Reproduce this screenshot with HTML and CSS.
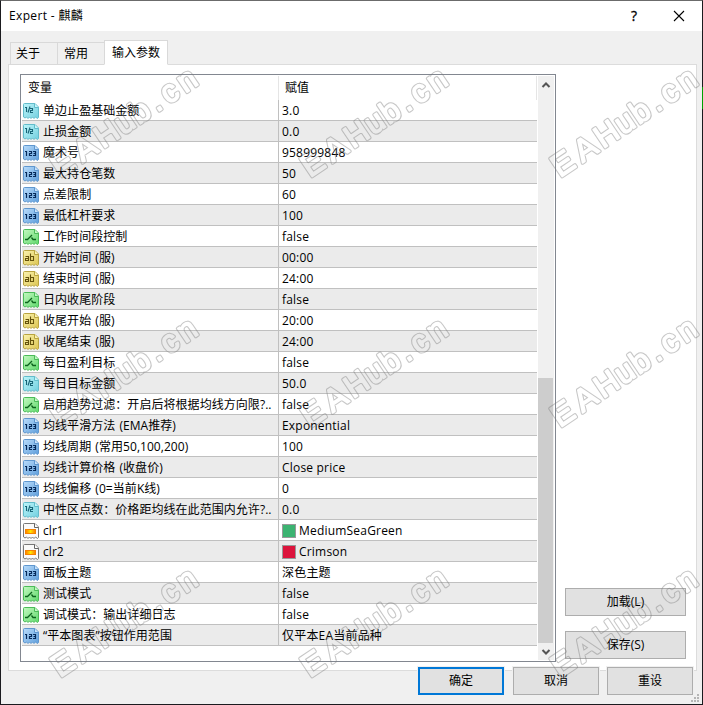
FILE: index.html
```
<!DOCTYPE html>
<html lang="zh-CN">
<head>
<meta charset="utf-8">
<title>Expert - 麒麟</title>
<link rel="stylesheet" href="styles.css">
</head>
<body>
<svg class="defs" width="0" height="0" aria-hidden="true">
  <defs>
    <linearGradient id="gBlue" x2="1" y2="1"><stop offset="0" stop-color="#b9dcfb"/><stop offset="1" stop-color="#5f9edb"/></linearGradient>
    <linearGradient id="gCyan" x2="1" y2="1"><stop offset="0" stop-color="#bdf5fa"/><stop offset="1" stop-color="#72cfdf"/></linearGradient>
    <linearGradient id="gGreen" x2="1" y2="1"><stop offset="0" stop-color="#c4f8c0"/><stop offset="1" stop-color="#5fd96c"/></linearGradient>
    <linearGradient id="gYellow" x2="1" y2="1"><stop offset="0" stop-color="#fbf3ae"/><stop offset="1" stop-color="#dcc552"/></linearGradient>
    <linearGradient id="gOrange"><stop offset="0" stop-color="#ff7a00"/><stop offset=".5" stop-color="#ffe600"/><stop offset="1" stop-color="#ff7a00"/></linearGradient>
    <path id="sheet" d="M.5 1.500q0-1 1-1H12L15.500 4V14.500L14.500 15.500L12.500 14L11 15.500L9.500 14L8 15.500L6.500 14L5 15.500L3.500 14L2 15L.5 14Z"/>
    <path id="fold" d="M11.500.5V4.500H15.500"/>
    <symbol id="int" viewBox="0 0 16 16"><use href="#sheet" fill="url(#gBlue)" stroke="#5f97cf"/><use href="#fold" fill="#c8e2fb" stroke="#5f97cf"/><path d="M2 6.500H3.500V11M6 6.500H8.500V8.500H6.500V10.500H9M10 6.500H12.500V10.500H10M10.500 8.500H12.500" fill="none" stroke="#062a5a" stroke-width="1.200"/></symbol>
    <symbol id="dbl" viewBox="0 0 16 16"><use href="#sheet" fill="url(#gCyan)" stroke="#62bccb"/><use href="#fold" fill="#c9f6fa" stroke="#62bccb"/><path d="M2 4.500H3.500V9M5 9.500L7 3.500M7 5.500H9.500V7.500H7.500V9.500H10" fill="none" stroke="#176477" stroke-width="1.100"/></symbol>
    <symbol id="bool" viewBox="0 0 16 16"><use href="#sheet" fill="url(#gGreen)" stroke="#4bbb58"/><use href="#fold" fill="#c4f7c4" stroke="#4bbb58"/><path d="M2 10.500H4.500L9 6M8.500 8.500L10 10.500H13" fill="none" stroke="#0c641d" stroke-width="1.300"/></symbol>
    <symbol id="str" viewBox="0 0 16 16"><use href="#sheet" fill="url(#gYellow)" stroke="#b9a440"/><use href="#fold" fill="#fbf3b8" stroke="#b9a440"/><path d="M2.500 6.500H5.500V10.500H2.500V8.500H5.500M7.500 3.500V10.500H10.500V6.500H7.500" fill="none" stroke="#64520b" stroke-width="1.100"/></symbol>
    <symbol id="clr" viewBox="0 0 16 16"><use href="#sheet" fill="#fafafa" stroke="#777"/><use href="#fold" fill="#fff" stroke="#666"/><rect x="2.500" y="6.500" width="10" height="4" fill="url(#gOrange)" stroke="#f58200"/></symbol>
    <mask id="ring" maskUnits="userSpaceOnUse" x="-10" y="-40" width="200" height="60">
      <text class="wm-text wm-outer" x="0 27 52 76 95 117 131 151" y="0">EAHub.cn</text>
      <text class="wm-text wm-inner" x="0 27 52 76 95 117 131 151" y="0">EAHub.cn</text>
    </mask>
    <g id="wm" transform="rotate(-34)"><rect x="-10" y="-40" width="200" height="60" fill="#777" fill-opacity=".42" mask="url(#ring)"/></g>
  </defs>
</svg>
<div class="window">
  <header class="titlebar">
    <span class="title">Expert - 麒麟</span>
    <span class="help">?</span>
    <svg class="close" width="12" height="12" viewBox="0 0 12 12"><path d="M1 1L11 11M11 1L1 11" stroke="#000" stroke-width="1.100"/></svg>
  </header>
  <nav class="tabs"><span class="tab">关于</span><span class="tab">常用</span><span class="tab active">输入参数</span></nav>
  <main class="panel">
    <section class="list">
      <div class="table">
        <div class="head"><span class="cell">变量</span><span class="cell">赋值</span></div>
        <div id="rows"></div>
      </div>
      <div class="scroll">
        <svg width="16" height="20" viewBox="0 0 16 20"><path d="M4.500 11L8 7.500L11.500 11" fill="none" stroke="#555" stroke-width="2"/></svg>
        <div class="thumb"></div>
        <svg width="16" height="17" viewBox="0 0 16 17"><path d="M4.500 7L8 10.500L11.500 7" fill="none" stroke="#555" stroke-width="2"/></svg>
      </div>
    </section>
    <aside class="side"><button>加载(L)</button><button>保存(S)</button></aside>
  </main>
  <footer class="actions"><button class="default">确定</button><button>取消</button><button>重设</button></footer>
  <svg class="grip" width="8" height="8" viewBox="0 0 8 8" fill="#b5b5b5"><path d="M6 0h2v2h-2zM3 3h2v2h-2zM6 3h2v2h-2zM0 6h2v2h-2zM3 6h2v2h-2zM6 6h2v2h-2z"/></svg>
  <i class="edge-mark"></i>
</div>
<svg class="watermarks" width="703" height="705" aria-hidden="true">
  <use href="#wm" transform="translate(60 178)"/><use href="#wm" transform="translate(310 178)"/><use href="#wm" transform="translate(560 178)"/>
  <use href="#wm" transform="translate(60 428)"/><use href="#wm" transform="translate(310 428)"/><use href="#wm" transform="translate(560 428)"/>
  <use href="#wm" transform="translate(60 678)"/><use href="#wm" transform="translate(310 678)"/><use href="#wm" transform="translate(560 678)"/>
</svg>
<script src="rows.js"></script>
</body>
</html>
```
FILE: styles.css
```
* { box-sizing: border-box; }
body { margin: 0; font: 12px/20px "Open Sans", "Noto Sans CJK SC", sans-serif; color: #000; overflow: hidden; }
.defs { position: absolute; }
.window { position: relative; width: 703px; height: 705px; background: #f0f0f0; border: 1px solid #1b1b1f; border-top-color: #6b6b6b; display: flex; flex-direction: column; }
.titlebar { height: 30px; background: #fff; display: flex; align-items: center; padding: 0 17px 0 8px; flex: none; }
.title { flex: 1; letter-spacing: .35px; }
.help { font-size: 14px; margin-right: 36px; -webkit-text-stroke: .3px #000; }
.close { display: block; }
.tabs { height: 34px; display: flex; align-items: flex-end; padding-left: 9px; margin-bottom: -1px; position: relative; z-index: 1; flex: none; }
.tab { height: 23px; width: 48px; margin-right: -1px; border: 1px solid #d9d9d9; padding-left: 5px; line-height: 22px; }
.tab + .tab { padding-left: 6px; }
.tab.active { height: 25px; width: 64px; background: #fff; border-bottom-color: #fff; padding-left: 7px; line-height: 23px; }
.panel { height: 607px; width: 689px; margin-left: 7px; background: #fff; border: 1px solid #dcdcdc; display: flex; padding: 9px 10px 8px 11px; flex: none; }
.list { width: 536px; height: 588px; border: 1px solid #828790; display: flex; padding: 1px; flex: none; }
.table { width: 515px; margin-right: 1px; flex: none; }
.head, .row { display: grid; grid-template-columns: 257px 258px; }
.head { height: 24px; line-height: 23px; }
.head .cell { border-right: 1px solid #e5e5e5; padding-left: 6px; }
.row { height: 21px; border-bottom: 1px solid #c0c0c0; }
.row:nth-child(even) { background: #ebebeb; }
.row .cell { display: flex; align-items: center; white-space: pre; overflow: hidden; padding: 2px 0 0 3px; letter-spacing: .2px; }
.row .name { border-right: 1px solid #c0c0c0; padding-left: 1px; letter-spacing: .05px; word-spacing: 1px; }
.icon { width: 16px; height: 16px; margin-right: 4px; flex: none; }
.swatch { width: 14px; height: 14px; border: 1px solid #999; margin-right: 3px; }
.scroll { width: 16px; background: #f0f0f0; display: flex; flex-direction: column; flex: none; }
.thumb { width: 15px; height: 265px; background: #cdcdcd; margin-top: auto; }
.scroll svg { display: block; flex: none; }
.side { display: flex; flex-direction: column; justify-content: flex-end; gap: 15px; margin-left: 9px; padding-bottom: 3px; }
button { font: inherit; background: #e1e1e1; border: 1px solid #adadad; border-radius: 0; height: 28px; width: 121px; padding: 0; color: #000; }
.actions { display: flex; gap: 8px; padding-left: 417px; margin-top: -4px; }
.actions button { width: 86px; box-shadow: 0 0 0 1px #f0f0f0; }
.actions .default { border: 2px solid #0078d7; margin-right: 1px; }
.grip { position: absolute; right: 3px; bottom: 2px; }
.edge-mark { position: absolute; right: -1px; top: 86px; width: 1px; height: 22px; background: #00a000; }
.watermarks { position: absolute; left: 0; top: 0; }
.wm-text { font: 31.500px "Liberation Sans", sans-serif; stroke-linejoin: round; }
.wm-outer { fill: #fff; stroke: #fff; stroke-width: 3.600px; }
.wm-inner { fill: #000; stroke: #000; stroke-width: 1.600px; }
```
FILE: rows.js
```
const data = [
  ["dbl", "单边止盈基础金额", "3.0"],
  ["dbl", "止损金额", "0.0"],
  ["int", "魔术号", "958999848"],
  ["int", "最大持仓笔数", "50"],
  ["int", "点差限制", "60"],
  ["int", "最低杠杆要求", "100"],
  ["bool", "工作时间段控制", "false"],
  ["str", "开始时间 (服)", "00:00"],
  ["str", "结束时间 (服)", "24:00"],
  ["bool", "日内收尾阶段", "false"],
  ["str", "收尾开始 (服)", "20:00"],
  ["str", "收尾结束 (服)", "24:00"],
  ["bool", "每日盈利目标", "false"],
  ["dbl", "每日目标金额", "50.0"],
  ["bool", "启用趋势过滤：开启后将根据均线方向限?..", "false"],
  ["int", "均线平滑方法 (EMA推荐)", "Exponential"],
  ["int", "均线周期 (常用50,100,200)", "100"],
  ["int", "均线计算价格 (收盘价)", "Close price"],
  ["int", "均线偏移 (0=当前K线)", "0"],
  ["dbl", "中性区点数：价格距均线在此范围内允许?..", "0.0"],
  ["clr", "clr1", "MediumSeaGreen", "#3cb371"],
  ["clr", "clr2", "Crimson", "#dc143c"],
  ["int", "面板主题", "深色主题"],
  ["bool", "测试模式", "false"],
  ["bool", "调试模式：输出详细日志", "false"],
  ["int", "“平本图表”按钮作用范围", "仅平本EA当前品种"]
];
document.getElementById("rows").innerHTML = data.map(([icon, name, value, color]) =>
  `<div class="row"><span class="cell name"><svg class="icon"><use href="#${icon}"/></svg>${name}</span>` +
  `<span class="cell">${color ? `<i class="swatch" style="background:${color}"></i>` : ""}${value}</span></div>`
).join("");
```
